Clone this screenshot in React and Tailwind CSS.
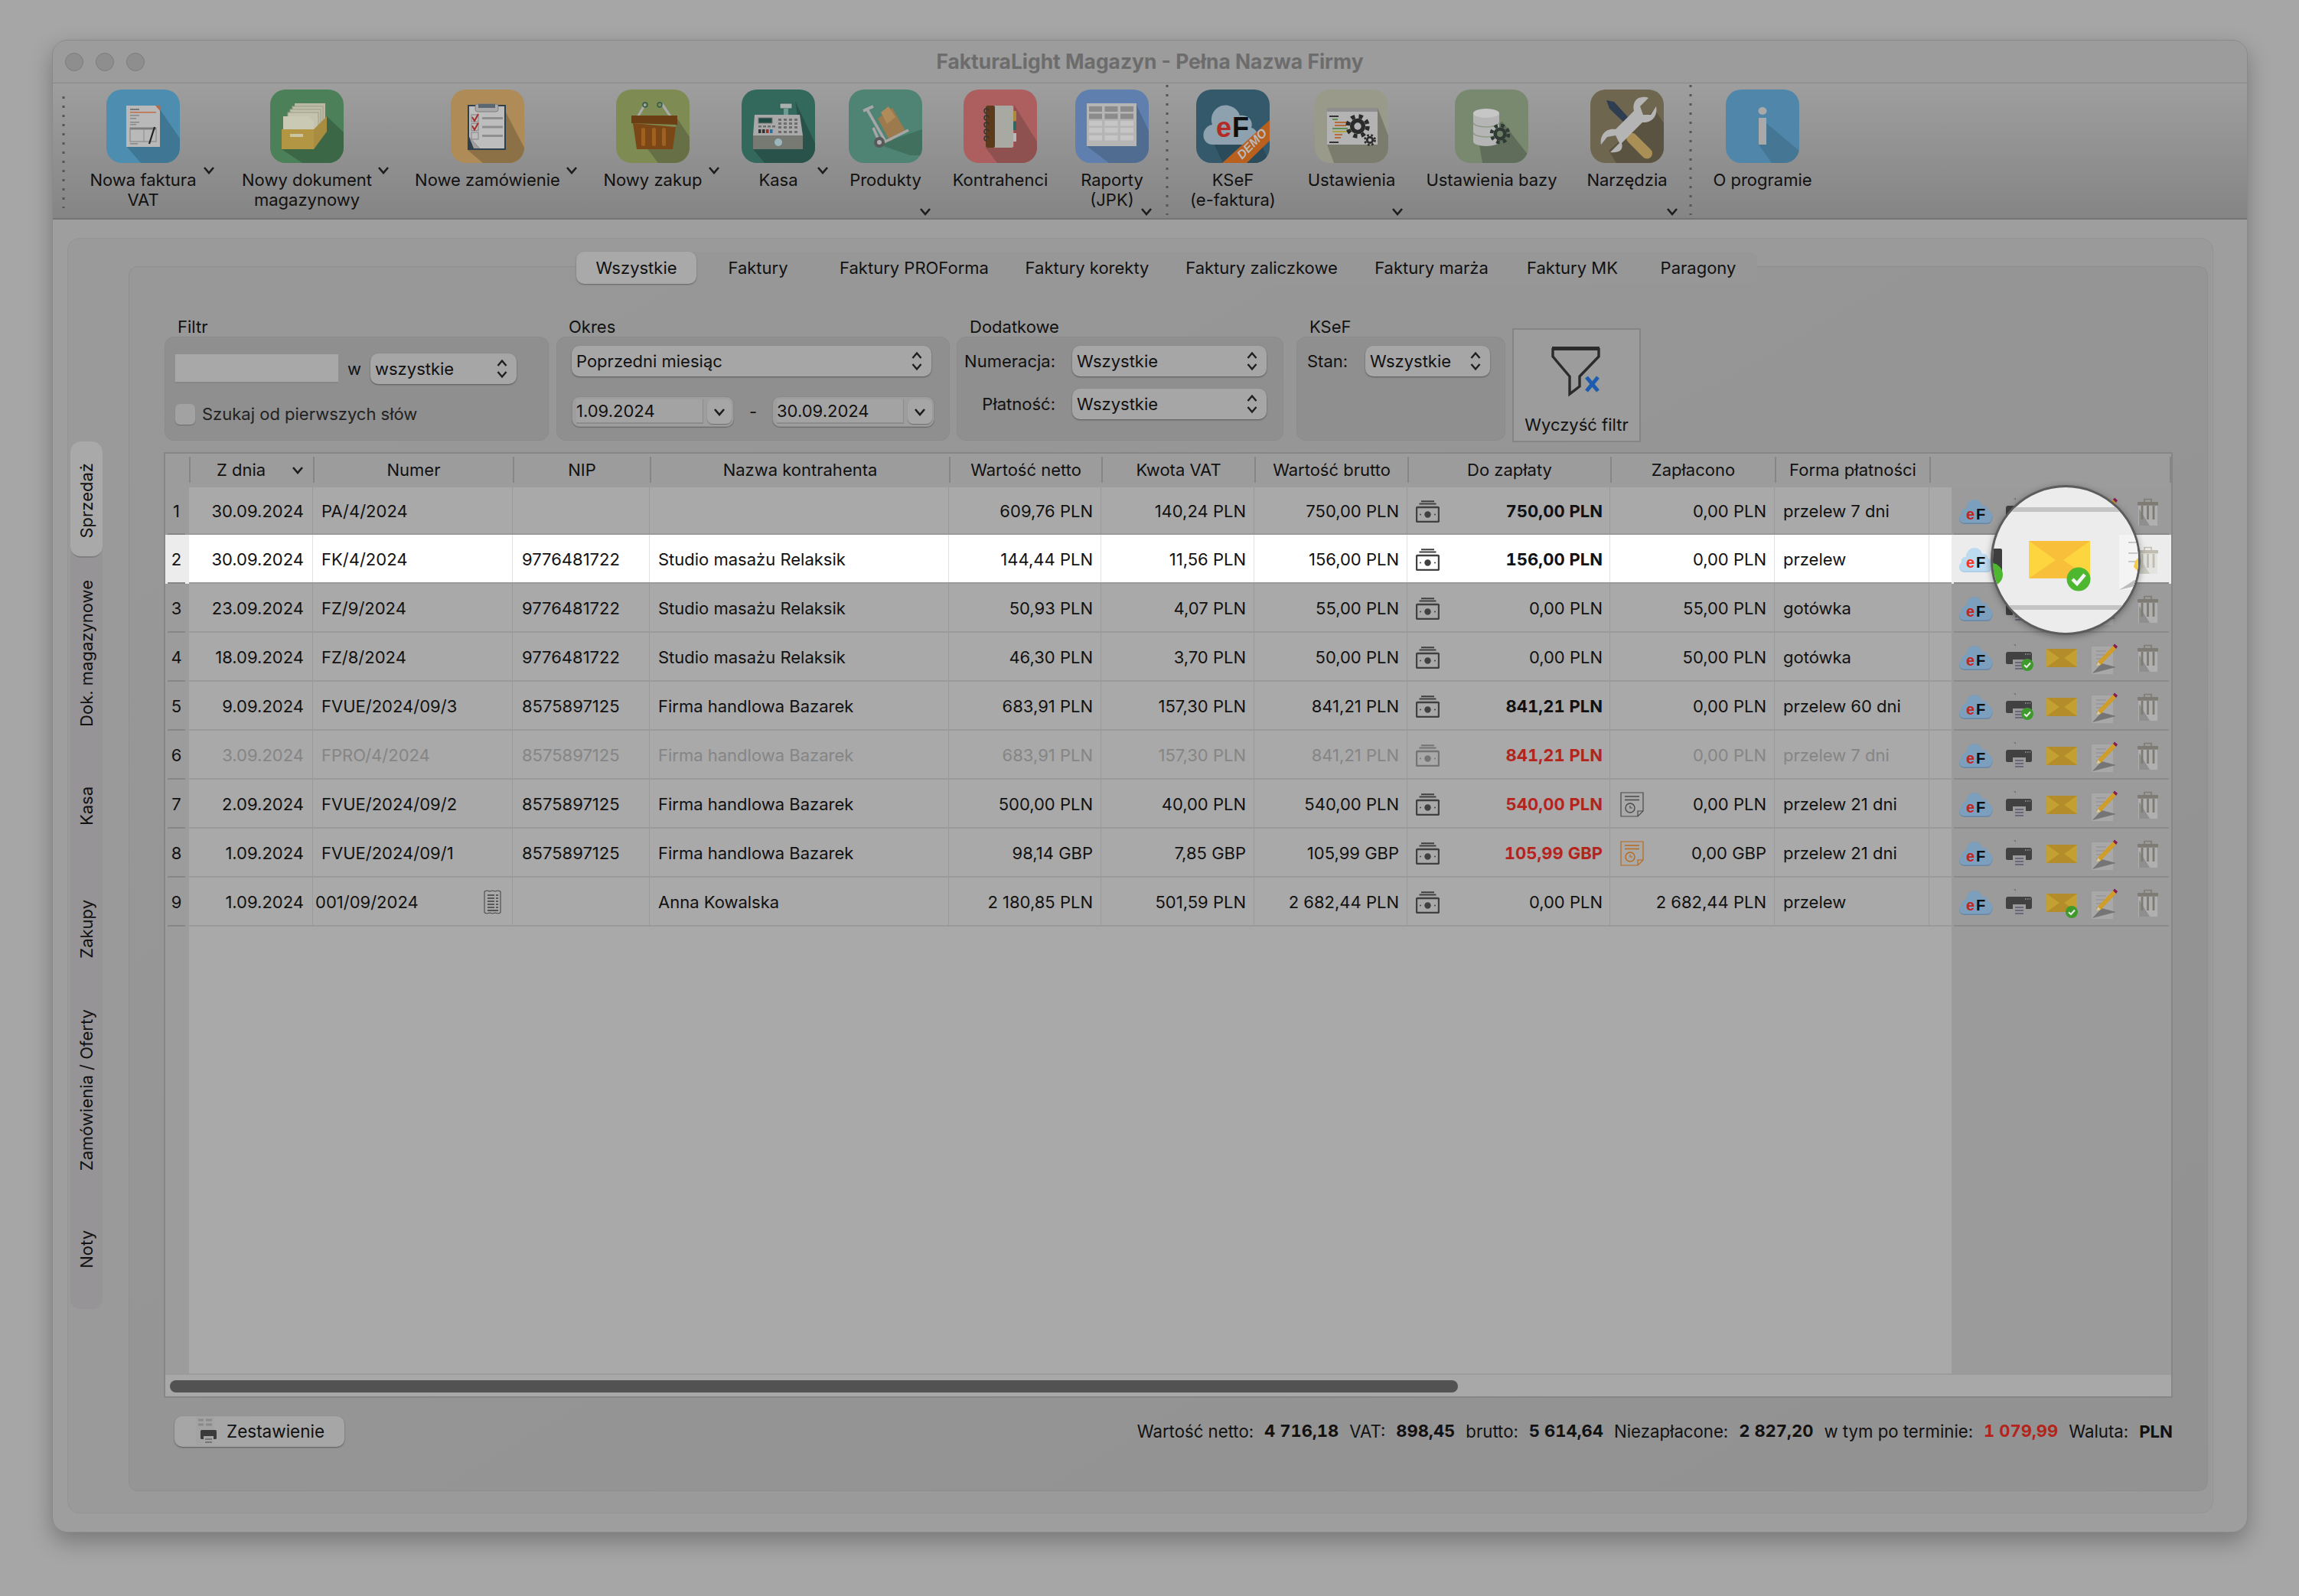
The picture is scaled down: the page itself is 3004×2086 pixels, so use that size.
import React from 'react'

const Arrow = ({ className = '' }) => (
  <svg className={className} width="16" height="11" viewBox="0 0 16 11">
    <path d="M2 2 L8 9 L14 2" fill="none" stroke="#1c1c1c" strokeWidth="2.6" />
  </svg>
)

const UpDown = () => (
  <svg width="16" height="28" viewBox="0 0 16 28">
    <path d="M2.5 10 L8 3.5 L13.5 10 M2.5 18 L8 24.5 L13.5 18" fill="none" stroke="#1e1e1e" strokeWidth="2.4" />
  </svg>
)

const Dots = ({ height, className = '' }) => (
  <svg className={className} width="4" height={height}>
    <line x1="2" y1="0" x2="2" y2={height} stroke="#555" strokeWidth="3" strokeDasharray="3 9" />
  </svg>
)

const Gear = ({ cx, cy, r, fill = '#2b2b2b', hole = '#9a9a8a' }) => (
  <g>
    <circle cx={cx} cy={cy} r={r} fill="none" stroke={fill} strokeWidth={r * 0.42} strokeDasharray={`${r * 0.4} ${r * 0.4}`} />
    <circle cx={cx} cy={cy} r={r * 0.78} fill={fill} />
    <circle cx={cx} cy={cy} r={r * 0.36} fill={hole} />
  </g>
)

function Tile({ bg, shadow, pts, children }) {
  return (
    <div className="w-24 h-24 rounded-[20px] overflow-hidden">
      <svg width="96" height="96" viewBox="0 0 96 96">
        <rect width="96" height="96" fill={bg} />
        <polygon points={pts} fill={shadow} />
        {children}
      </svg>
    </div>
  )
}

const icons = {
  invoice: (
    <Tile bg="#4d8eb0" shadow="#3f7693" pts="70,26 96,64 96,96 45,96 26,74">
      <rect x="26" y="21" width="44" height="54" fill="#b9b9b9" />
      <polygon points="64,21 70,21 70,28" fill="#b9694a" />
      <rect x="31" y="25" width="12" height="2" fill="#777" />
      <rect x="31" y="29" width="34" height="1.6" fill="#c0714f" />
      <rect x="31" y="33" width="12" height="1.6" fill="#8a8a8a" />
      <rect x="31" y="37" width="8" height="1.6" fill="#8a8a8a" />
      <rect x="31" y="42" width="12" height="1.6" fill="#8a8a8a" />
      <rect x="31" y="45" width="8" height="1.6" fill="#8a8a8a" />
      <rect x="31" y="50" width="34" height="18" fill="none" stroke="#8a8a8a" strokeWidth="1.2" />
      <rect x="31" y="50" width="34" height="2.4" fill="#7d7d7d" />
      <line x1="49" y1="52" x2="49" y2="68" stroke="#8a8a8a" />
      <rect x="31" y="70" width="10" height="1.6" fill="#8a8a8a" />
      <path d="M56 71 L63 49" stroke="#222" strokeWidth="2.2" />
    </Tile>
  ),
  files: (
    <Tile bg="#4b8058" shadow="#3c6746" pts="74,35 96,56 96,96 42,96 15,78 57,78">
      <rect x="32" y="18" width="40" height="38" fill="#b9b8a2" />
      <rect x="29" y="22" width="40" height="34" fill="#bdbca6" stroke="#9d9c87" />
      <rect x="26" y="26" width="40" height="30" fill="#c1c0aa" stroke="#9d9c87" />
      <rect x="23" y="30" width="40" height="26" fill="#c4c3ad" stroke="#9d9c87" />
      <polygon points="17,35 50,35 57,42 57,52 17,52" fill="#cac9b4" />
      <polygon points="57,52 74,35 74,55 57,78" fill="#a88c3f" />
      <rect x="15" y="52" width="42" height="26" fill="#b29644" />
      <rect x="26" y="58" width="17" height="4" fill="#cbc4a5" />
    </Tile>
  ),
  clipboard: (
    <Tile bg="#ae8b57" shadow="#8c7146" pts="72,30 96,76 96,96 42,96 22,79 72,79">
      <rect x="22" y="20" width="50" height="59" fill="#2e3f4d" />
      <rect x="24" y="22" width="46" height="55" fill="#bdbdbd" />
      <polygon points="24,62 24,77 38,77" fill="#2e3f4d" />
      <polygon points="24,62 38,77 30,77" fill="#9f9f9f" />
      <rect x="32" y="19" width="30" height="10" rx="3" fill="#a9a9a9" stroke="#7e7e7e" />
      <rect x="36" y="19" width="22" height="5" fill="#5a6771" />
      {[33, 44.5, 56].map((y, i) => (
        <g key={y}>
          <rect x="27" y={y} width="9" height="9" fill="none" stroke="#8c8c8c" strokeWidth="1.2" />
          <rect x="41" y={y + 3} width="27" height="3" fill="#8f8f8f" />
          {i < 2 && <path d={`M28 ${y + 3} L31 ${y + 8} L36 ${y - 1}`} fill="none" stroke="#a52f28" strokeWidth="2" />}
        </g>
      ))}
    </Tile>
  ),
  basket: (
    <Tile bg="#7e8b53" shadow="#666f45" pts="80,38 96,62 96,96 55,96 30,63 72,77">
      <path d="M27 38 L38 19 M73 38 L60 19" stroke="#a9a9a9" strokeWidth="3.2" />
      <circle cx="38" cy="20" r="3" fill="none" stroke="#2f5a4f" strokeWidth="1.4" />
      <circle cx="57" cy="20" r="3" fill="none" stroke="#2f5a4f" strokeWidth="1.4" />
      <polygon points="20,34 80,34 80,46 20,44" fill="#6b3f13" />
      <polygon points="22,44 78,49 74,78 27,78" fill="#7b4717" />
      {[33, 47, 60].map((x) => (
        <rect key={x} x={x} y="50" width="5" height="24" rx="2.5" fill="#a0601f" />
      ))}
    </Tile>
  ),
  register: (
    <Tile bg="#33685d" shadow="#28524a" pts="70,15 96,70 96,96 30,96 15,78 80,78">
      <rect x="50" y="18" width="16" height="7" fill="#a9b1ae" stroke="#2c5b52" />
      <rect x="55" y="25" width="6" height="8" fill="#6e9c93" />
      <polygon points="17,33 76,33 80,60 15,60" fill="#a9a9a9" />
      <rect x="22" y="37" width="18" height="7" fill="#1f4a44" stroke="#777" />
      {[48, 55, 62, 69].map((x) => [38, 43, 48, 54].map((y) => <rect key={`${x}-${y}`} x={x} y={y} width="4" height="3" fill="#6d6d6d" />))}
      {[22, 27, 32, 37].map((x, i) => (
        <rect key={x} x={x} y="52" width="3.5" height="5" fill={['#333', '#333', '#a12e28', '#2a6f9a'][i]} />
      ))}
      {[22, 28, 34, 40].map((x) => <rect key={x} x={x} y="47" width="4" height="2.5" fill="#6d6d6d" />)}
      <rect x="15" y="60" width="65" height="18" fill="#777a72" />
      <ellipse cx="48" cy="69" rx="5" ry="5" fill="#9bb7bd" />
    </Tile>
  ),
  truck: (
    <Tile bg="#4f8475" shadow="#42705f" pts="40,72 55,66 96,52 96,86 80,86">
      <polygon points="38,38 57,24 74,54 54,68" fill="#9c7a4e" />
      <polygon points="42,30 52,22 61,36 50,45" fill="#b18a59" />
      <path d="M19 28 L32 22 M24 26 L48 68 L78 53" fill="none" stroke="#a6a6a6" strokeWidth="3.6" />
      <path d="M32 50 L40 68" stroke="#a6a6a6" strokeWidth="3.6" />
      <circle cx="40" cy="69" r="7" fill="#595959" />
      <circle cx="40" cy="69" r="3" fill="#b0b0b0" />
    </Tile>
  ),
  notebook: (
    <Tile bg="#ad5f5f" shadow="#8f5050" pts="66,20 96,68 96,96 44,96 28,75 66,75">
      <rect x="62" y="28" width="7" height="13" fill="#ad8a3a" />
      <rect x="62" y="42" width="7" height="11" fill="#2e6a62" />
      <rect x="62" y="57" width="7" height="11" fill="#b9b9b9" />
      <rect x="29" y="21" width="36" height="55" rx="2" fill="#a7a9a2" />
      <rect x="29" y="21" width="12" height="55" rx="2" fill="#5e3a1d" />
      {[28, 37, 46, 55, 64].map((y) => (
        <path key={y} d={`M33 ${y} a3 3 0 1 0 -6 0 a3 3 0 0 0 3 3`} fill="none" stroke="#333" strokeWidth="1.4" />
      ))}
    </Tile>
  ),
  table: (
    <Tile bg="#5f80ae" shadow="#506c91" pts="80,20 96,54 96,96 44,96 15,74 80,74">
      <rect x="15" y="18" width="65" height="56" fill="#b5b5b5" />
      {[22, 31.5].map((y) => [18, 38.5, 59].map((x) => <rect key={`${x}-${y}`} x={x} y={y} width="17" height="7" fill="#8b8b8b" />))}
      {[41, 50, 60].map((y) => [18, 38.5, 59].map((x) => <rect key={`${x}-${y}`} x={x} y={y} width="17" height="6.5" fill="#c6c6c6" />))}
    </Tile>
  ),
  ksef: (
    <Tile bg="#33596b" shadow="#2b4b5b" pts="18,60 80,60 96,96 35,96">
      <path d="M22 72 C5 72 6 48 21 46 C16 30 30 18 42 21 C52 23 56 30 57 34 C69 32 75 42 72 50 C82 52 86 72 72 72 Z" fill="#8da2ae" />
      <text x="26" y="62" fontFamily="Liberation Sans" fontWeight="700" fontSize="36" fill="#b52a24">e</text>
      <text x="47" y="62" fontFamily="Liberation Sans" fontWeight="700" fontSize="36" fill="#0e0e0e">F</text>
      <polygon points="96,40 96,67 66,96 34,96" fill="#b9601f" />
      <text x="0" y="0" fontFamily="Liberation Sans" fontStyle="italic" fontWeight="700" fontSize="16" fill="#b9b9b9" transform="translate(60 92) rotate(-46)">DEMO</text>
    </Tile>
  ),
  settings: (
    <Tile bg="#9a9a8a" shadow="#7c7c6e" pts="82,24 96,60 96,96 25,96 16,72 82,72">
      <rect x="16" y="24" width="66" height="48" fill="#b3b3b3" />
      <rect x="16" y="24" width="66" height="5" fill="#8e8e8e" />
      {[
        [19, 34, 12, '#333'], [23, 38, 7, '#5c8f50'], [26, 42, 18, '#b66b3b'], [26, 46, 15, '#b66b3b'], [23, 50, 20, '#5c8f50'],
        [23, 54, 22, '#a8a33f'], [26, 58, 10, '#b66b3b'], [26, 62, 8, '#b66b3b'], [19, 68, 12, '#333'],
      ].map(([x, y, w, c]) => <rect key={y} x={x} y={y} width={w} height="2" fill={c} />)}
      <Gear cx="56" cy="48" r="13" hole="#b3b3b3" />
      <Gear cx="72" cy="66" r="6.5" hole="#b3b3b3" />
    </Tile>
  ),
  database: (
    <Tile bg="#78896f" shadow="#5f6d5a" pts="30,60 62,42 96,86 96,96 36,96">
      <path d="M24 31 L24 68 A17 6 0 0 0 58 68 L58 31 Z" fill="#b5b5b5" />
      <ellipse cx="41" cy="31" rx="17" ry="6" fill="#c6c6c6" />
      <path d="M24 43 A17 6 0 0 0 58 43 M24 56 A17 6 0 0 0 58 56" fill="none" stroke="#8e9a87" strokeWidth="1.6" />
      <Gear cx="59" cy="58" r="11" fill="#2f3a35" hole="#6e7e66" />
    </Tile>
  ),
  tools: (
    <Tile bg="#6f6650" shadow="#5a5341" pts="84,26 96,44 96,96 34,96 24,80">
      <rect x="50" y="52" width="42" height="14" rx="7" transform="rotate(45 50 58)" fill="#a98e55" />
      <path d="M21 14 L31 16 L51 38 L45 44 L25 25 Z" fill="#2f3d50" />
      <path d="M63 11 C73 8 76 11 76 11 L65 22 L69 33 L79 33 L86 22 C88 32 83 44 68 43 L41 70 C44 80 36 83 26 82 L38 70 L33 60 L22 62 L14 72 C12 60 20 50 33 52 L57 28 C55 20 58 14 63 11 Z" fill="#b4b4b4" />
    </Tile>
  ),
  info: (
    <Tile bg="#5086aa" shadow="#457693" pts="53,44 96,80 96,96 60,96 43,72">
      <ellipse cx="48" cy="28" rx="5.5" ry="5" fill="#a9a9a9" />
      <rect x="43" y="37" width="10" height="35" fill="#a9a9a9" />
    </Tile>
  ),
}

// chevron left offsets are relative to each item
const tools = [
  { icon: 'invoice', lines: ['Nowa faktura', 'VAT'], cls: 'w-[160px] ml-[22px]', arrow: 'left-[158px] top-[100px]' },
  { icon: 'files', lines: ['Nowy dokument', 'magazynowy'], cls: 'w-[220px] ml-[24px]', arrow: 'left-[202px] top-[100px]' },
  { icon: 'clipboard', lines: ['Nowe zamówienie'], cls: 'w-[216px] ml-[18px]', arrow: 'left-[210px] top-[100px]' },
  { icon: 'basket', lines: ['Nowy zakup'], cls: 'w-[180px] ml-[18px]', arrow: 'left-[162px] top-[100px]' },
  { icon: 'register', lines: ['Kasa'], cls: 'w-[100px] ml-[24px]', arrow: 'left-[100px] top-[100px]' },
  { icon: 'truck', lines: ['Produkty'], cls: 'w-[120px] ml-[30px]', arrow: 'left-[104px] top-[154px]' },
  { icon: 'notebook', lines: ['Kontrahenci'], cls: 'w-[130px] ml-[25px]' },
  { icon: 'table', lines: ['Raporty', '(JPK)'], cls: 'w-[120px] ml-[21px]', arrow: 'left-[97px] top-[154px]' },
  'sep',
  { icon: 'ksef', lines: ['KSeF', '(e-faktura)'], cls: 'w-[140px] ml-[14px]' },
  { icon: 'settings', lines: ['Ustawienia'], cls: 'w-[140px] ml-[15px]', arrow: 'left-[122px] top-[154px]' },
  { icon: 'database', lines: ['Ustawienia bazy'], cls: 'w-[200px] ml-[13px]' },
  { icon: 'tools', lines: ['Narzędzia'], cls: 'w-[130px] ml-[12px]', arrow: 'left-[116px] top-[154px]' },
  'sep2',
  { icon: 'info', lines: ['O programie'], cls: 'w-[160px] ml-[12px]' },
]

const tabs = [
  ['Wszystkie', 'w-[157px] bg-[#a9a9a9] rounded-[10px] shadow-[0_1px_2px_rgba(0,0,0,0.35)]'],
  ['Faktury', 'w-[161px]'],
  ['Faktury PROForma', 'w-[247px]'],
  ['Faktury korekty', 'w-[205px]'],
  ['Faktury zaliczkowe', 'w-[251px]'],
  ['Faktury marża', 'w-[193px]'],
  ['Faktury MK', 'w-[175px]'],
  ['Paragony', 'w-[154px]'],
]

const sideTabs = [
  ['Sprzedaż', 'h-[152px] bg-[#a9a9a9] rounded-[14px] border-b-2 border-[#808080]'],
  ['Dok. magazynowe', 'h-[246px]'],
  ['Kasa', 'h-[154px]'],
  ['Zakupy', 'h-[166px]'],
  ['Zamówienia / Oferty', 'h-[256px]'],
  ['Noty', 'h-[160px]'],
]

const columns = [
  { w: 'w-[162px]', label: 'Z dnia', extra: 'pr-[28px]' },
  { w: 'w-[261px]', label: 'Numer' },
  { w: 'w-[179px]', label: 'NIP' },
  { w: 'w-[391px]', label: 'Nazwa kontrahenta' },
  { w: 'w-[199px]', label: 'Wartość netto' },
  { w: 'w-[200px]', label: 'Kwota VAT' },
  { w: 'w-[200px]', label: 'Wartość brutto' },
  { w: 'w-[265px]', label: 'Do zapłaty' },
  { w: 'w-[215px]', label: 'Zapłacono' },
  { w: 'w-[202px]', label: 'Forma płatności' },
]

const STUDIO = ['9776481722', 'Studio masażu Relaksik']
const FIRMA = ['8575897125', 'Firma handlowa Bazarek']

const rows = [
  { date: '30.09.2024', num: 'PA/4/2024', nip: '', name: '', net: '609,76 PLN', vat: '140,24 PLN', gross: '750,00 PLN', due: '750,00 PLN', dueCls: 'font-bold tabular-nums', paid: '0,00 PLN', form: 'przelew 7 dni', printed: true },
  { date: '30.09.2024', num: 'FK/4/2024', nip: STUDIO[0], name: STUDIO[1], net: '144,44 PLN', vat: '11,56 PLN', gross: '156,00 PLN', due: '156,00 PLN', dueCls: 'font-bold tabular-nums', paid: '0,00 PLN', form: 'przelew', active: true, printed: true },
  { date: '23.09.2024', num: 'FZ/9/2024', nip: STUDIO[0], name: STUDIO[1], net: '50,93 PLN', vat: '4,07 PLN', gross: '55,00 PLN', due: '0,00 PLN', paid: '55,00 PLN', form: 'gotówka', printed: true },
  { date: '18.09.2024', num: 'FZ/8/2024', nip: STUDIO[0], name: STUDIO[1], net: '46,30 PLN', vat: '3,70 PLN', gross: '50,00 PLN', due: '0,00 PLN', paid: '50,00 PLN', form: 'gotówka', printed: true },
  { date: '9.09.2024', num: 'FVUE/2024/09/3', nip: FIRMA[0], name: FIRMA[1], net: '683,91 PLN', vat: '157,30 PLN', gross: '841,21 PLN', due: '841,21 PLN', dueCls: 'font-bold tabular-nums', paid: '0,00 PLN', form: 'przelew 60 dni', printed: true },
  { date: '3.09.2024', num: 'FPRO/4/2024', nip: FIRMA[0], name: FIRMA[1], net: '683,91 PLN', vat: '157,30 PLN', gross: '841,21 PLN', due: '841,21 PLN', dueCls: 'font-bold tabular-nums text-[#b3241c]', paid: '0,00 PLN', form: 'przelew 7 dni', faded: true },
  { date: '2.09.2024', num: 'FVUE/2024/09/2', nip: FIRMA[0], name: FIRMA[1], net: '500,00 PLN', vat: '40,00 PLN', gross: '540,00 PLN', due: '540,00 PLN', dueCls: 'font-bold tabular-nums text-[#b3241c]', paid: '0,00 PLN', form: 'przelew 21 dni', doc: '#4a4a4a' },
  { date: '1.09.2024', num: 'FVUE/2024/09/1', nip: FIRMA[0], name: FIRMA[1], net: '98,14 GBP', vat: '7,85 GBP', gross: '105,99 GBP', due: '105,99 GBP', dueCls: 'font-bold tabular-nums text-[#b3241c]', paid: '0,00 GBP', form: 'przelew 21 dni', doc: '#b86a1c' },
  { date: '1.09.2024', num: '001/09/2024', nip: '', name: 'Anna Kowalska', net: '2 180,85 PLN', vat: '501,59 PLN', gross: '2 682,44 PLN', due: '0,00 PLN', paid: '2 682,44 PLN', form: 'przelew', receipt: true, mailed: true },
]

const CheckBadge = ({ size = 16, cls = '' }) => (
  <svg className={cls} width={size} height={size} viewBox="0 0 16 16">
    <circle cx="8" cy="8" r="8" fill="#3d9a2b" />
    <path d="M4 8.2 L7 11 L12 5.5" fill="none" stroke="#e8e8e8" strokeWidth="2.2" />
  </svg>
)

const CashIcon = ({ faded }) => (
  <svg width="31" height="29" viewBox="0 0 31 29" className={faded ? 'opacity-50' : ''}>
    <path d="M7 1.2 H24 M4.5 4.6 H26.5" stroke="#404040" strokeWidth="2" />
    <rect x="1" y="9" width="29" height="19" rx="1.5" fill="none" stroke="#404040" strokeWidth="2.4" />
    <circle cx="15.5" cy="18.5" r="4.2" fill="#404040" />
    <circle cx="6" cy="18.5" r="1" fill="#404040" />
    <circle cx="25" cy="18.5" r="1" fill="#404040" />
  </svg>
)

const DocClock = ({ color }) => (
  <svg width="31" height="33" viewBox="0 0 31 33">
    <path d="M1 1 H30 V25 L23 32 H1 Z" fill="none" stroke={color} strokeWidth="1.2" />
    <path d="M23 32 V25 H30" fill="none" stroke={color} strokeWidth="1.2" />
    <path d="M6 6 H25 M6 10.5 H25" stroke={color} strokeWidth="1.4" />
    <circle cx="13" cy="21" r="6" fill="none" stroke={color} strokeWidth="1.4" />
    <path d="M13 18 V21 H16" fill="none" stroke={color} strokeWidth="1.2" />
  </svg>
)

const ReceiptIcon = () => (
  <svg width="23" height="32" viewBox="0 0 23 32">
    <path d="M1 2 l3.5 -1 l3.5 1 l3.5 -1 l3.5 1 l3.5 -1 l3.5 1 V30 l-3.5 1 l-3.5 -1 l-3.5 1 l-3.5 -1 l-3.5 1 l-3.5 -1 Z" fill="none" stroke="#3e3e3e" strokeWidth="1" />
    {[7, 11, 15, 19, 23].map((y) => (
      <path key={y} d={`M5 ${y} H14 M16 ${y} H19`} stroke="#3e3e3e" strokeWidth="1.4" />
    ))}
    <path d="M5 27 H19" stroke="#3e3e3e" strokeWidth="1.6" />
  </svg>
)

const EfCloud = ({ active }) => (
  <svg width="45" height="33" viewBox="0 0 45 33">
    <path d="M8 32 C1 32 -1 24 4 20 C3 15 7 12 10 13 C10 6 15 1 21 1 C27 1 30 5 31 9 C36 8 39 12 38 15 C44 16 46 23 43 28 C42 31 39 32 37 32 Z" fill={active ? '#a9cbe6' : '#6586a4'} />
    <path d="M8 30.5 C1 30.5 -1 23 4 19 C3 14 7 11 10 12 C10 5 15 0 21 0 C27 0 30 4 31 8 C36 7 39 11 38 14 C44 15 46 22 43 26.5 C42 29.5 39 30.5 37 30.5 Z" fill={active ? '#bcdaf0' : '#7c9fbd'} />
    <text x="10" y="26" fontFamily="Liberation Sans" fontWeight="700" fontSize="20" fill={active ? '#f5331f' : '#c0261c'}>e</text>
    <text x="23" y="26" fontFamily="Liberation Sans" fontWeight="700" fontSize="20" fill="#0d0d0d">F</text>
  </svg>
)

const Printer = ({ check }) => (
  <div className="relative w-[35px] h-[36px]">
    <svg width="35" height="36" viewBox="0 0 35 36">
      <polygon points="10,0 13,0 13,3" fill="#5d7d86" />
      <path d="M3 10 H31 Q34 10 34 13 V24 Q34 26 31 26 H3 Q0 26 0 24 V13 Q0 10 3 10 Z" fill="#414141" />
      <rect x="9" y="20" width="17" height="15" fill="#9a9a9a" />
      <path d="M12 24 H23 M12 28 H23 M12 32 H23" stroke="#5b5870" strokeWidth="1.4" />
      <path d="M25 13 H26.5 M28 13 H29.5 M31 13 H32" stroke="#999" strokeWidth="1.4" />
    </svg>
    {check && <CheckBadge cls="absolute left-[20px] top-[19px]" />}
  </div>
)

const Envelope = ({ check }) => (
  <div className="relative w-[40px] h-[24px]">
    <svg width="40" height="24" viewBox="0 0 40 24">
      <rect width="40" height="24" fill="#b48d2a" />
      <polygon points="0,0 17,12 0,24" fill="#c2a032" />
      <polygon points="40,0 23,12 40,24" fill="#c2a032" />
    </svg>
    {check && <CheckBadge cls="absolute left-[25px] top-[16px]" />}
  </div>
)

const PencilDoc = () => (
  <svg width="35" height="41" viewBox="0 0 35 41">
    <rect x="0" y="5" width="28" height="36" fill="#a8a8a8" />
    <path d="M6 11 H19 M6 16 H17 M6 21 H14 M6 26 H10" stroke="#8c8c8c" strokeWidth="1.2" />
    <polygon points="1,40 13,27 32,32" fill="#757575" />
    <polygon points="8,25 28,4 32,8 12,29 7,30" fill="#d09d28" />
    <polygon points="8,25 12,29 7,30" fill="#d8c9a8" />
    <polygon points="28,4 30,1.5 34,5 32,8" fill="#8a1a50" />
  </svg>
)

const Trash = ({ active }) => (
  <svg width="27" height="36" viewBox="0 0 27 36">
    <rect x="1" y="10" width="25" height="26" fill={active ? '#e3e3df' : '#b0b0b0'} />
    <polygon points="2,14 2,36 16,36" fill={active ? '#c9c9c2' : '#8f8f8f'} />
    <rect x="0" y="5" width="27" height="4.5" fill={active ? '#c0bdb0' : '#7e7b72'} rx="1" />
    <path d="M9 5 V1.5 H18 V5" fill="none" stroke={active ? '#c0bdb0' : '#7e7b72'} strokeWidth="1.6" />
    <path d="M6 10 V28 M13.5 10 V28 M21 10 V28" stroke={active ? '#c0bdb0' : '#7e7b72'} strokeWidth="2.8" />
  </svg>
)

const Funnel = () => (
  <svg width="68" height="68" viewBox="0 0 68 68">
    <path d="M3 4 V15 L25 41 V64 L38 54 V41 L63 15 V4" fill="none" stroke="#2b2b2b" strokeWidth="3.4" />
    <rect x="2" y="2" width="62" height="5" fill="#2b2b2b" />
    <path d="M47 42 L62 60 M62 42 L47 60" stroke="#1c5bb0" strokeWidth="5" />
  </svg>
)

const ReportPrint = () => (
  <svg width="30" height="44" viewBox="0 0 30 44">
    <rect x="2" y="2" width="24" height="38" fill="#a3a3a3" />
    <path d="M5 7 H12 M15 7 H23 M5 13 H12 M15 13 H23" stroke="#8a8a8a" strokeWidth="3" />
    <rect x="8" y="20" width="21" height="12" rx="1.5" fill="#3b3b3b" />
    <rect x="12" y="28" width="13" height="14" fill="#a5a5a5" />
    <path d="M14 32 H23 M14 36 H23" stroke="#666" strokeWidth="1.4" />
  </svg>
)

const Select = ({ label, w, h = 'h-[40px]' }) => (
  <div className={`${w} ${h} rounded-[10px] bg-[#a6a6a6] shadow-[0_1px_2px_rgba(0,0,0,0.4)] flex items-center justify-between pl-[6px] pr-[11px]`}>
    <span>{label}</span>
    <UpDown />
  </div>
)

const DateField = ({ value }) => (
  <div className="w-[212px] h-[40px] rounded-[10px] border border-[#8a8a8a] bg-[#9e9e9e] flex items-center pl-[5px] pr-[2px] shadow-[0_1px_1px_rgba(0,0,0,0.25)]">
    <div className="flex-1 h-[32px] flex items-center border-b-2 border-r border-[#8b8b8b] bg-[#a3a3a3]">{value}</div>
    <div className="ml-[5px] w-[32px] h-[32px] rounded-[7px] bg-[#a6a6a6] flex items-center justify-center shadow-[0_1px_1px_rgba(0,0,0,0.3)]">
      <Arrow />
    </div>
  </div>
)

function Group({ label, w, labelPl, inner, children }) {
  return (
    <div className={w}>
      <div className={`h-[26px] flex items-center ${labelPl}`}>{label}</div>
      <div className={`h-[136px] rounded-[12px] bg-[#8f8f8f] border border-[#8b8b8b] ${inner}`}>{children}</div>
    </div>
  )
}

function TableRow({ row, first }) {
  const textCls = row.faded ? 'text-[#858585]' : 'text-[#111]'
  const cellCls = `h-full flex items-center pt-[2px] border-r ${row.active ? 'border-[#e2e2e2]' : 'border-[#999]'}`
  return (
    <div className={`flex ${first ? 'h-[62px]' : 'h-[64px]'} ${textCls} ${row.active ? 'bg-white border-b-2 border-[#9a9a9a]' : 'border-b-2 border-[#9a9a9a]'}`}>
      <div className={`${cellCls} w-[162px] justify-end pr-[11px]`}>{row.date}</div>
      <div className={`${cellCls} w-[261px] justify-between ${row.receipt ? 'pl-[3px] pr-[14px]' : 'pl-[11px]'}`}>
        <span>{row.num}</span>
        {row.receipt && <ReceiptIcon />}
      </div>
      <div className={`${cellCls} w-[179px] pl-[12px]`}>{row.nip}</div>
      <div className={`${cellCls} w-[391px] pl-[11px]`}>{row.name}</div>
      <div className={`${cellCls} w-[199px] justify-end pr-[10px]`}>{row.net}</div>
      <div className={`${cellCls} w-[200px] justify-end pr-[10px]`}>{row.vat}</div>
      <div className={`${cellCls} w-[200px] justify-end pr-[10px]`}>{row.gross}</div>
      <div className={`${cellCls} w-[265px] justify-between pl-[11px] pr-[9px]`}>
        <CashIcon faded={row.faded} />
        <span className={`text-[#111] ${row.dueCls || ''}`}>{row.due}</span>
      </div>
      <div className={`${cellCls} w-[215px] justify-between pl-[13px] pr-[10px]`}>
        <span>{row.doc && <DocClock color={row.doc} />}</span>
        <span>{row.paid}</span>
      </div>
      <div className={`${cellCls} w-[202px] pl-[11px]`}>{row.form}</div>
      <div className="w-[29px]" />
    </div>
  )
}

function ActionRow({ row, first }) {
  return (
    <div className={`${first ? 'h-[62px]' : 'h-[64px]'} ${row.active ? 'bg-[#ececec]' : ''}`}>
      <div className="mx-[3px] h-full flex items-center pl-[6px] pt-[4px] border-b-2 border-[#8a8a8a]">
        <EfCloud active={row.active} />
        <div className="ml-[17px]"><Printer check={row.printed} /></div>
        <div className="ml-[18px]"><Envelope check={row.mailed} /></div>
        <div className="ml-[19px]"><PencilDoc /></div>
        <div className="ml-[25px]"><Trash active={row.active} /></div>
      </div>
    </div>
  )
}

// powiekszenie ikony koperty nad wierszem 2
function Magnifier() {
  return (
    <div className="absolute left-[2385px] top-[41px] w-[196px] h-[196px] rounded-full border-[3px] border-[#5c5c5c] bg-[#ececec] overflow-hidden shadow-[0_2px_8px_rgba(0,0,0,0.35)]">
      <svg width="190" height="190" viewBox="0 0 190 190">
        <rect x="0" y="26" width="190" height="6" fill="#c4c4c4" />
        <rect x="0" y="154" width="190" height="6" fill="#c4c4c4" />
        <rect x="-4" y="80" width="16" height="32" rx="2" fill="#3e3e3e" />
        <circle cx="-2" cy="114" r="15" fill="#4db82f" />
        <rect x="47" y="70" width="80" height="49" fill="#f8bf3a" />
        <polygon points="47,70 82,95 47,119" fill="#fdd63f" />
        <polygon points="127,70 92,95 127,119" fill="#fdd63f" />
        <circle cx="112" cy="120" r="15.5" fill="#4db82f" />
        <path d="M104 120 L110 126 L120 114" fill="none" stroke="#f5f5f5" strokeWidth="4.5" />
        <rect x="165" y="62" width="30" height="72" fill="#f4f4f4" />
        <path d="M177 72 H190 M177 86 H190 M177 97 H190" stroke="#c8c8c8" strokeWidth="2" />
        <polygon points="186,96 192,90 192,112 184,104" fill="#f3cb4d" />
        <polygon points="165,134 190,118 190,128" fill="#bdbdbd" />
      </svg>
    </div>
  )
}

function App() {
  return (
    <div className="w-[3004px] h-[2086px] bg-[#a6a6a6] pt-[52px] pl-[68px] font-['Inter',sans-serif] text-[22px] text-[#111]">
      <div className="w-[2869px] h-[1951px] rounded-[20px] overflow-hidden border border-[#8a8a8a] bg-[#9e9e9e] flex flex-col shadow-[0_12px_30px_rgba(0,0,0,0.28)]">
        {/* Title bar */}
        <div className="h-[56px] shrink-0 grid grid-cols-[1fr_auto_1fr] items-center bg-[#9c9c9c] border-b border-[#888]">
          <div className="flex items-center gap-4 pl-4">
            <div className="w-6 h-6 rounded-full bg-[#8e8e8e] border border-[#7c7c7c]" />
            <div className="w-6 h-6 rounded-full bg-[#8e8e8e] border border-[#7c7c7c]" />
            <div className="w-6 h-6 rounded-full bg-[#8e8e8e] border border-[#7c7c7c]" />
          </div>
          <div className="text-[26.4px] font-bold text-[#6c6c6c]">FakturaLight Magazyn - Pełna Nazwa Firmy</div>
        </div>

        {/* Toolbar */}
        <div className="h-[178px] shrink-0 flex pt-2 bg-gradient-to-b from-[#9e9e9e] to-[#858585] border-b-2 border-[#747474]">
          <Dots height={146} className="ml-[12px] mt-[9px] shrink-0" />
          {tools.map((t) => {
            if (t === 'sep') return <Dots key={t} height={170} className="ml-[10px] -mt-[6px] shrink-0" />
            if (t === 'sep2') return <Dots key={t} height={170} className="ml-[16px] -mt-[6px] shrink-0" />
            return (
              <div key={t.icon} className={`relative shrink-0 flex flex-col items-center ${t.cls}`}>
                {icons[t.icon]}
                <div className="mt-[9px] leading-[26px] text-center whitespace-nowrap">
                  {t.lines.map((l) => <div key={l}>{l}</div>)}
                </div>
                {t.arrow && <Arrow className={`absolute ${t.arrow}`} />}
              </div>
            )
          })}
        </div>

        {/* Body */}
        <div className="flex-1 pt-[24px] pl-[19px] pr-[44px] pb-[24px]">
          <div className="h-full flex bg-[#9a9a9a] rounded-[16px] border border-[#949494]">
            <div className="w-[42px] ml-[3px] mt-[265px] self-start bg-[#969496] rounded-[14px] shrink-0">
              {sideTabs.map(([label, cls]) => (
                <div key={label} className={`flex items-center justify-center ${cls}`}>
                  <span className="mt-[4px] [writing-mode:vertical-rl] rotate-180 whitespace-nowrap">{label}</span>
                </div>
              ))}
            </div>

            <div className="flex-1 ml-[34px] mr-[6px] mt-[36px] mb-[28px] rounded-[12px] bg-gradient-to-br from-[#989898] to-[#929292] border border-[#8e8e8e] flex flex-col">
              {/* Document type tabs */}
              <div className="ml-[584px] -mt-[20px] w-[1543px] h-[42px] rounded-[10px] bg-[#979797] flex items-center">
                {tabs.map(([label, cls]) => (
                  <div key={label} className={`h-full flex items-center justify-center ${cls}`}>{label}</div>
                ))}
              </div>

              {/* Filters */}
              <div className="flex items-start ml-[46px] mt-[43px] h-[164px]">
                <Group label="Filtr" w="w-[502px]" labelPl="pl-[17px]" inner="pl-[13px] pt-[21px]">
                  <div className="flex items-center">
                    <div className="w-[213px] h-[38px] bg-[#a8a8a8] border-b-2 border-[#868686]" />
                    <div className="w-[42px] text-center">w</div>
                    <Select label="wszystkie" w="w-[191px]" />
                  </div>
                  <div className="flex items-center mt-[23px]">
                    <div className="w-[26px] h-[27px] rounded-[6px] bg-[#a2a2a2] shadow-[0_1px_1px_rgba(0,0,0,0.25)]" />
                    <span className="ml-[9px] text-[#222]">Szukaj od pierwszych słów</span>
                  </div>
                </Group>
                <Group label="Okres" w="w-[514px] ml-[10px]" labelPl="pl-[16px]" inner="pl-[19px] pt-[11px]">
                  <Select label="Poprzedni miesiąc" w="w-[470px]" />
                  <div className="flex items-center mt-[26px]">
                    <DateField value="1.09.2024" />
                    <div className="w-[50px] text-center">-</div>
                    <DateField value="30.09.2024" />
                  </div>
                </Group>
                <Group label="Dodatkowe" w="w-[427px] ml-[9px]" labelPl="pl-[17px]" inner="pt-[11px]">
                  <div className="flex items-center">
                    <div className="w-[128px] text-right">Numeracja:</div>
                    <div className="ml-[22px]"><Select label="Wszystkie" w="w-[254px]" /></div>
                  </div>
                  <div className="flex items-center mt-[16px]">
                    <div className="w-[128px] text-right">Płatność:</div>
                    <div className="ml-[22px]"><Select label="Wszystkie" w="w-[254px]" /></div>
                  </div>
                </Group>
                <Group label="KSeF" w="w-[273px] ml-[17px]" labelPl="pl-[17px]" inner="pl-[13px] pt-[11px]">
                  <div className="flex items-center">
                    <div className="w-[76px]">Stan:</div>
                    <Select label="Wszystkie" w="w-[163px]" />
                  </div>
                </Group>
                <div className="ml-[9px] mt-[15px] w-[168px] h-[149px] border-2 border-[#858585] bg-[#9c9c9c] flex flex-col items-center pt-[20px]">
                  <Funnel />
                  <div className="mt-[20px] whitespace-nowrap">Wyczyść filtr</div>
                </div>
              </div>

              {/* Invoices table */}
              <div className="relative ml-[45px] mt-[13px] w-[2625px] h-[1236px] border-2 border-[#868686] flex flex-col bg-[#9c9c9c]">
                <div className="h-[44px] shrink-0 flex items-center pb-[2px]">
                  <div className="w-[31px]" />
                  {columns.map((c) => (
                    <div key={c.label} className={`relative h-[34px] border-l-2 border-[#868686] flex items-center justify-center ${c.w} ${c.extra || ''}`}>
                      {c.label}
                      {c.label === 'Z dnia' && <Arrow className="absolute right-[12px] top-[12px]" />}
                    </div>
                  ))}
                  <div className="h-[34px] flex-1 border-l-2 border-r-2 border-[#868686]" />
                </div>

                <div className="flex-1 flex min-h-0">
                  <div className="w-[31px] shrink-0">
                    {rows.map((row, i) => (
                      <div key={i} className={`${i === 0 ? 'h-[62px]' : 'h-[64px]'} ${row.active ? 'bg-[#ececec]' : ''}`}>
                        <div className="h-full ml-[3px] mr-[5px] flex items-center justify-center pt-[2px] border-b-2 border-[#868686]">{i + 1}</div>
                      </div>
                    ))}
                  </div>
                  <div className="w-[2303px] shrink-0 bg-[#a9a9a9] border-b-2 border-[#9c9c9c]">
                    {rows.map((row, i) => <TableRow key={i} row={row} first={i === 0} />)}
                  </div>
                  <div className="flex-1 bg-[#9b9b9b]">
                    {rows.map((row, i) => <ActionRow key={i} row={row} first={i === 0} />)}
                  </div>
                </div>

                <div className="h-[28px] shrink-0 bg-[#a8a8a8] pt-[7px] pl-[6px]">
                  <div className="w-[1683px] h-[16px] rounded-full bg-[#525252]" />
                </div>

                <Magnifier />
              </div>

              {/* Summary */}
              <div className="ml-[59px] mt-[24px] w-[2611px] h-[40px] flex items-center justify-between">
                <div className="w-[222px] h-[40px] rounded-[10px] bg-[#a6a6a6] shadow-[0_1px_2px_rgba(0,0,0,0.4)] flex items-center pl-[26px]">
                  <ReportPrint />
                  <span className="ml-[12px] text-[22.5px]">Zestawienie</span>
                </div>
                <div className="flex items-center gap-[12px] whitespace-nowrap text-[22.2px]">
                  <span>Wartość netto:</span><b className="ml-[2px] font-bold tabular-nums text-[22px]">4 716,18</b>
                  <span className="ml-[2px]">VAT:</span><b className="ml-[2px] font-bold tabular-nums text-[22px]">898,45</b>
                  <span className="ml-[2px]">brutto:</span><b className="ml-[2px] font-bold tabular-nums text-[22px]">5 614,64</b>
                  <span className="ml-[2px]">Niezapłacone:</span><b className="ml-[2px] font-bold tabular-nums text-[22px]">2 827,20</b>
                  <span className="ml-[2px]">w tym po terminie:</span><b className="ml-[2px] font-bold tabular-nums text-[22px] text-[#b3241c]">1 079,99</b>
                  <span className="ml-[2px]">Waluta:</span><b className="ml-[2px] font-bold">PLN</b>
                </div>
              </div>
            </div>
          </div>
        </div>
      </div>
    </div>
  )
}

export default App
